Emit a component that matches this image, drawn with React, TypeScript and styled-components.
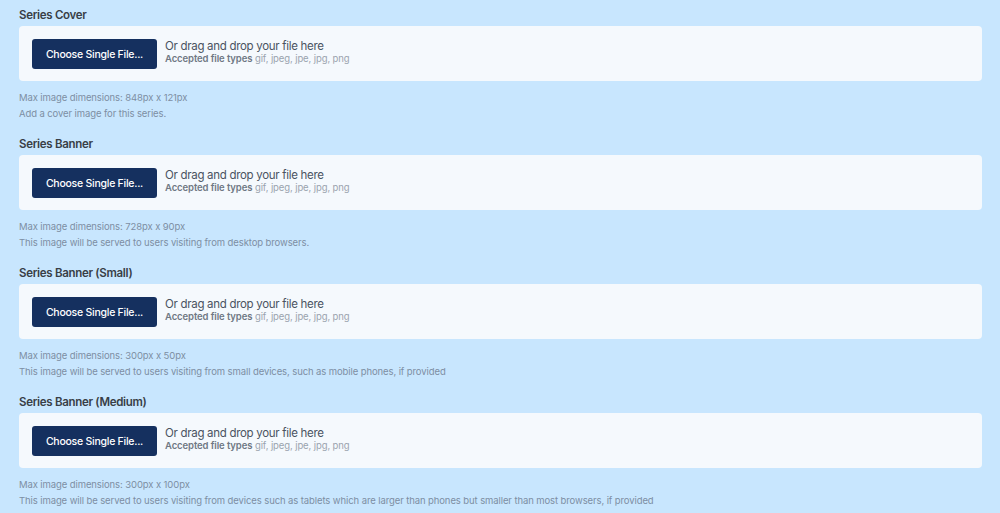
import React from "react";
import styled, { createGlobalStyle } from "styled-components";

const Global = createGlobalStyle`
  html, body { margin: 0; padding: 0; background: #c8e6fe; }
  body { font-family: Inter, "Noto Sans", sans-serif; -webkit-font-smoothing: antialiased; }
`;

const Page = styled.div`
  display: flex;
  flex-direction: column;
  gap: 13px;
  padding: 6px 18px 0 19px;
`;

const Section = styled.section`
  display: flex;
  flex-direction: column;
`;

const Title = styled.div`
  font-size: 11.5px;
  line-height: 18px;
  font-weight: 600;
  letter-spacing: -0.3px;
  color: #383e46;
  margin-bottom: 2px;
`;

const Card = styled.div`
  display: flex;
  align-items: flex-start;
  gap: 8px;
  height: 55px;
  box-sizing: border-box;
  padding: 13px 13px;
  background: #f5f9fd;
  border-radius: 4px;
`;

const Button = styled.button`
  width: 125px;
  height: 30px;
  border: none;
  border-radius: 3px;
  background: #15305f;
  color: #ffffff;
  font-family: Inter, sans-serif;
  font-size: 10.5px;
  letter-spacing: -0.25px;
  font-weight: 500;
  padding: 0;
`;

const Drop = styled.div`
  display: flex;
  flex-direction: column;
`;

const DropMain = styled.div`
  font-size: 11.5px;
  line-height: 14px;
  letter-spacing: -0.3px;
  color: #4a5361;
  margin-top: 0;
`;

const DropTypes = styled.div`
  font-size: 9.5px;
  line-height: 12px;
  letter-spacing: -0.1px;
  color: #9aa3ae;
  b { font-weight: 600; color: #6f7884; }
`;

const Meta = styled.div`
  margin-top: 9px;
  display: flex;
  flex-direction: column;
`;

const MetaLine = styled.div`
  font-size: 9.5px;
  line-height: 16px;
  letter-spacing: -0.1px;
  color: #7d8ea3;
`;

const items = [
  { title: "Series Cover", dims: "848px x 121px", help: "Add a cover image for this series." },
  { title: "Series Banner", dims: "728px x 90px", help: "This image will be served to users visiting from desktop browsers." },
  { title: "Series Banner (Small)", dims: "300px x 50px", help: "This image will be served to users visiting from small devices, such as mobile phones, if provided" },
  { title: "Series Banner (Medium)", dims: "300px x 100px", help: "This image will be served to users visiting from devices such as tablets which are larger than phones but smaller than most browsers, if provided" },
];

export default function App() {
  return (
    <>
      <Global />
      <Page>
        {items.map((it) => (
          <Section key={it.title}>
            <Title>{it.title}</Title>
            <Card>
              <Button>Choose Single File...</Button>
              <Drop>
                <DropMain>Or drag and drop your file here</DropMain>
                <DropTypes>
                  <b>Accepted file types</b> gif, jpeg, jpe, jpg, png
                </DropTypes>
              </Drop>
            </Card>
            <Meta>
              <MetaLine>Max image dimensions: {it.dims}</MetaLine>
              <MetaLine>{it.help}</MetaLine>
            </Meta>
          </Section>
        ))}
      </Page>
    </>
  );
}
